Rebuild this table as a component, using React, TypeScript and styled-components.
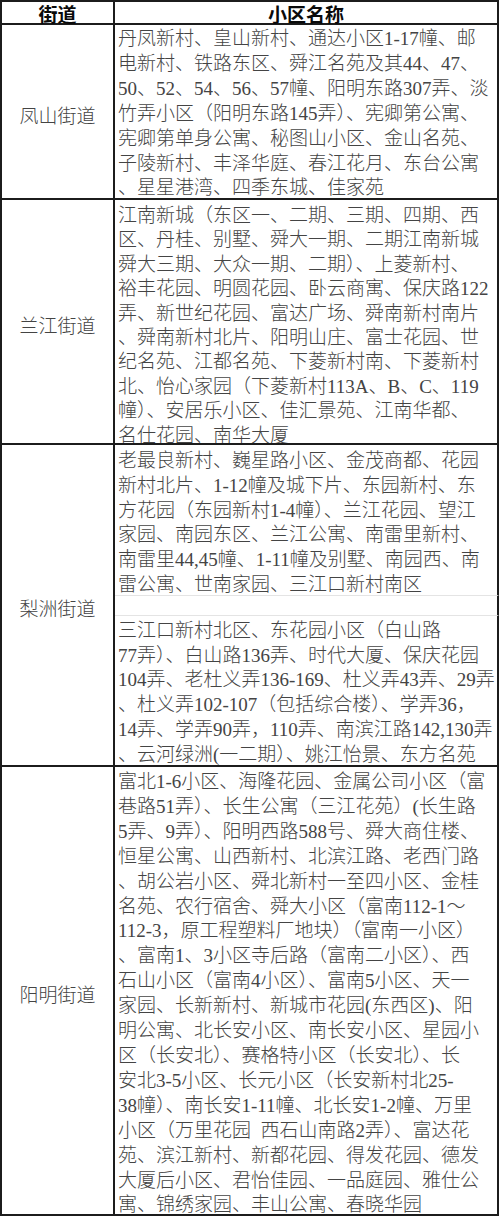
import React from "react";
import styled, { createGlobalStyle } from "styled-components";

const GlobalStyle = createGlobalStyle`
  html, body { margin: 0; padding: 0; background: #ffffff; }
  body { font-family: "Liberation Serif", "Noto Sans CJK SC", serif; }
`;

const LINE = "#1c1c1c";

const Table = styled.div`
  display: grid;
  grid-template-columns: 113px 384px;
  width: 497px;
  border-top: 2px solid ${LINE};
  border-left: 2px solid ${LINE};
`;

const HeadCell = styled.div`
  box-sizing: border-box;
  height: 23px;
  border-right: 2px solid ${LINE};
  border-bottom: 2px solid ${LINE};
  display: flex;
  align-items: center;
  justify-content: center;
  padding-top: 3px;
  font-family: "Noto Sans CJK SC", sans-serif;
  font-weight: 700;
  font-size: 19px;
  line-height: 20px;
  color: #0a0a0a;
`;

const Label = styled.div<{ $h: number; $span?: number }>`
  box-sizing: border-box;
  height: ${(p) => p.$h}px;
  grid-row: span ${(p) => p.$span ?? 1};
  border-right: 2px solid ${LINE};
  border-bottom: 2px solid ${LINE};
  display: flex;
  align-items: center;
  justify-content: center;
  padding-top: 5px;
  font-family: "Noto Sans CJK SC", sans-serif;
  font-weight: 300;
  font-size: 19px;
  color: #444444;
`;

const Names = styled.div<{ $h: number; $lh: number; $pt: number; $faint?: boolean }>`
  box-sizing: border-box;
  height: ${(p) => p.$h}px;
  border-right: 2px solid ${LINE};
  border-bottom: ${(p) => (p.$faint ? "1px solid #e4e4e4" : `2px solid ${LINE}`)};
  padding: ${(p) => p.$pt}px 0 0 3px;
  font-size: 19px;
  font-weight: 300;
  line-height: ${(p) => p.$lh}px;
  color: #444444;
  overflow: hidden;
`;

const Line = styled.div`
  white-space: nowrap;
`;

const fengshan = [
  "丹凤新村、皇山新村、通达小区1-17幢、邮",
  "电新村、铁路东区、舜江名苑及其44、47、",
  "50、52、54、56、57幢、阳明东路307弄、淡",
  "竹弄小区（阳明东路145弄）、宪卿第公寓、",
  "宪卿第单身公寓、秘图山小区、金山名苑、",
  "子陵新村、丰泽华庭、春江花月、东台公寓",
  "、星星港湾、四季东城、佳家苑",
];

const lanjiang = [
  "江南新城（东区一、二期、三期、四期、西",
  "区、丹桂、别墅、舜大一期、二期江南新城",
  "舜大三期、大众一期、二期）、上菱新村、",
  "裕丰花园、明圆花园、卧云商寓、保庆路122",
  "弄、新世纪花园、富达广场、舜南新村南片",
  "、舜南新村北片、阳明山庄、富士花园、世",
  "纪名苑、江都名苑、下菱新村南、下菱新村",
  "北、怡心家园（下菱新村113A、B、C、119",
  "幢）、安居乐小区、佳汇景苑、江南华都、",
  "名仕花园、南华大厦",
];

const lizhouA = [
  "老最良新村、巍星路小区、金茂商都、花园",
  "新村北片、1-12幢及城下片、东园新村、东",
  "方花园（东园新村1-4幢）、兰江花园、望江",
  "家园、南园东区、兰江公寓、南雷里新村、",
  "南雷里44,45幢、1-11幢及别墅、南园西、南",
  "雷公寓、世南家园、三江口新村南区",
];

const lizhouB = [
  "三江口新村北区、东花园小区（白山路",
  "77弄）、白山路136弄、时代大厦、保庆花园",
  "104弄、老杜义弄136-169、杜义弄43弄、29弄",
  "、杜义弄102-107（包括综合楼）、学弄36，",
  "14弄、学弄90弄，110弄、南滨江路142,130弄",
  "、云河绿洲(一二期）、姚江怡景、东方名苑",
];

const yangming = [
  "富北1-6小区、海隆花园、金属公司小区（富",
  "巷路51弄）、长生公寓（三江花苑）(长生路",
  "5弄、9弄）、阳明西路588号、舜大商住楼、",
  "恒星公寓、山西新村、北滨江路、老西门路",
  "、胡公岩小区、舜北新村一至四小区、金桂",
  "名苑、农行宿舍、舜大小区（富南112-1～",
  "112-3，原工程塑料厂地块）（富南一小区）",
  "、富南1、3小区寺后路（富南二小区）、西",
  "石山小区（富南4小区）、富南5小区、天一",
  "家园、长新新村、新城市花园(东西区)、阳",
  "明公寓、北长安小区、南长安小区、星园小",
  "区（长安北）、赛格特小区（长安北）、长",
  "安北3-5小区、长元小区（长安新村北25-",
  "38幢）、南长安1-11幢、北长安1-2幢、万里",
  "小区（万里花园\u00a0\u00a0西石山南路2弄）、富达花",
  "苑、滨江新村、新都花园、得发花园、德发",
  "大厦后小区、君怡佳园、一品庭园、雅仕公",
  "寓、锦绣家园、丰山公寓、春晓华园",
];

const Lines = ({ items }: { items: string[] }) => (
  <>
    {items.map((t, i) => (
      <Line key={i}>{t}</Line>
    ))}
  </>
);

export default function App() {
  return (
    <>
      <GlobalStyle />
      <Table>
        <HeadCell>街道</HeadCell>
        <HeadCell>小区名称</HeadCell>

        <Label $h={175}>凤山街道</Label>
        <Names $h={175} $lh={24.9} $pt={2}>
          <Lines items={fengshan} />
        </Names>

        <Label $h={245}>兰江街道</Label>
        <Names $h={245} $lh={24.4} $pt={4}>
          <Lines items={lanjiang} />
        </Names>

        <Label $h={322} $span={3}>梨洲街道</Label>
        <Names $h={151} $lh={24.8} $pt={4} $faint>
          <Lines items={lizhouA} />
        </Names>
        <Names $h={20} $lh={20} $pt={0} $faint />
        <Names $h={151} $lh={24.7} $pt={3}>
          <Lines items={lizhouB} />
        </Names>

        <Label $h={449}>阳明街道</Label>
        <Names $h={449} $lh={24.9} $pt={3}>
          <Lines items={yangming} />
        </Names>
      </Table>
    </>
  );
}
